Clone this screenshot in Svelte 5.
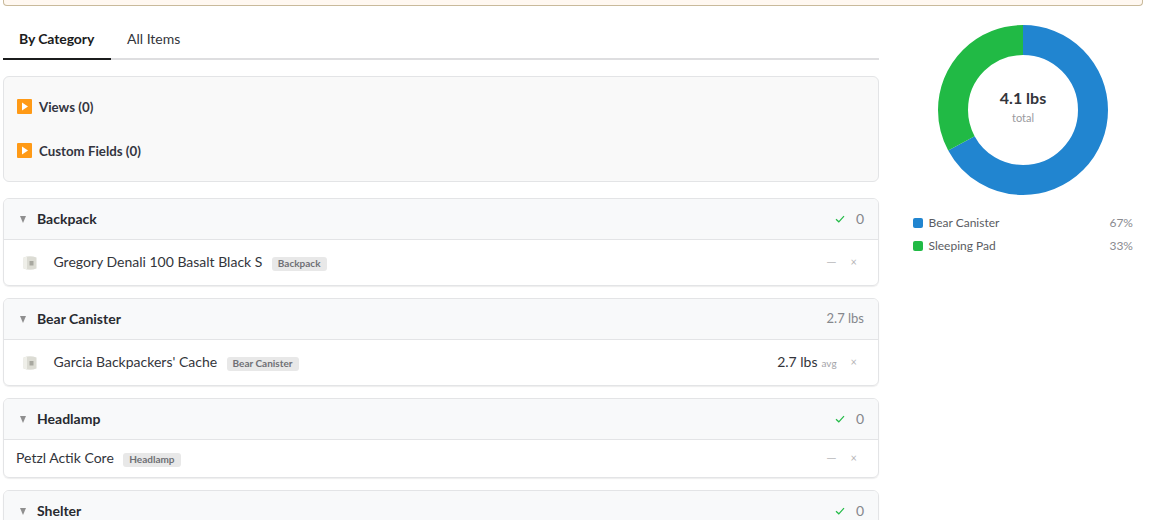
<script>
  const categories = [
    {
      name: 'Backpack',
      weight: null,
      items: [{ name: 'Gregory Denali 100 Basalt Black S', tag: 'Backpack', thumb: true, weight: null }]
    },
    {
      name: 'Bear Canister',
      weight: '2.7 lbs',
      items: [{ name: "Garcia Backpackers' Cache", tag: 'Bear Canister', thumb: true, weight: '2.7 lbs' }]
    },
    {
      name: 'Headlamp',
      weight: null,
      items: [{ name: 'Petzl Actik Core', tag: 'Headlamp', thumb: false, weight: null }]
    },
    { name: 'Shelter', weight: null, items: [] }
  ]

  const slices = [
    { name: 'Bear Canister', pct: 67, color: '#2185d0' },
    { name: 'Sleeping Pad', pct: 33, color: '#21ba45' }
  ]

  const circ = 2 * Math.PI * 70
  const sections = ['Views (0)', 'Custom Fields (0)']

  function offset(i) {
    let sum = 0
    for (let j = 0; j < i; j++) sum += slices[j].pct
    return (-sum / 100) * circ
  }
</script>

<div class="page">
  <div class="banner"></div>

  <div class="layout">
    <div class="main">
      <div class="tabs">
        <div class="tab active">By Category</div>
        <div class="tab">All Items</div>
      </div>

      <div class="panel">
        {#each sections as s}
          <div class="section">
            <svg class="emoji" viewBox="0 0 15 15" width="15" height="15">
              <rect width="15" height="15" rx="1" fill="#ff9a16" />
              <path d="M5 3.5 L11 7.5 L5 11.5 Z" fill="#fff" />
            </svg>
            <span class="section-name">{s}</span>
          </div>
        {/each}
      </div>

      {#each categories as cat}
        <div class="card">
          <div class="card-head">
            <span class="caret"></span>
            <span class="cat-name">{cat.name}</span>
            <span class="cat-total">
              {#if cat.weight}
                <span class="cat-weight">{cat.weight}</span>
              {:else}
                <svg class="check" viewBox="0 0 10 8" width="10" height="8">
                  <path d="M1 4.2 L3.8 6.8 L9 1.2" fill="none" stroke="#21ba45" stroke-width="1.2" />
                </svg>
                <span class="count">0</span>
              {/if}
            </span>
          </div>
          {#each cat.items as item}
            <div class="row" class:thumbed={item.thumb}>
              {#if item.thumb}
                <svg class="thumb" viewBox="0 0 16 16" width="16" height="16">
                  <path d="M1.5 2.5 Q8 0 14.5 2.5 L14.5 13.5 Q8 16 1.5 13.5 Z" fill="#dcdcd4" />
                  <path d="M1.5 2.5 Q2.5 8 1.5 13.5 L5 14.6 L5 1.5 Z" fill="#efefe9" />
                  <rect x="7.5" y="6" width="4" height="4.5" fill="#a8a8a0" />
                </svg>
              {/if}
              <span class="item-name">{item.name}</span>
              <span class="tag">{item.tag}</span>
              <span class="item-right">
                {#if item.weight}
                  <span class="item-weight">{item.weight}</span>
                  <span class="avg">avg</span>
                {:else}
                  <span class="dash">—</span>
                {/if}
                <span class="remove">×</span>
              </span>
            </div>
          {/each}
        </div>
      {/each}
    </div>

    <aside class="side">
      <div class="donut">
        <svg viewBox="0 0 170 170" width="170" height="170">
          {#each slices as s, i}
            <circle
              cx="85"
              cy="85"
              r="70"
              fill="none"
              stroke={s.color}
              stroke-width="30"
              stroke-dasharray="{(s.pct / 100) * circ} {circ}"
              stroke-dashoffset={offset(i)}
              transform="rotate(-90 85 85)"
            />
          {/each}
        </svg>
        <div class="donut-label">
          <div class="total">4.1 lbs</div>
          <div class="total-sub">total</div>
        </div>
      </div>

      <div class="legend">
        {#each slices as s}
          <div class="legend-row">
            <span class="swatch" style="background: {s.color}"></span>
            <span class="legend-name">{s.name}</span>
            <span class="legend-pct">{s.pct}%</span>
          </div>
        {/each}
      </div>
    </aside>
  </div>
</div>

<style>
  :global(body) {
    margin: 0;
    background: #fff;
    overflow: hidden;
  }

  .page {
    height: 520px;
    overflow: hidden;
    padding-left: 3px;
    font-family: Lato, sans-serif;
    color: #282a30;
  }

  .banner {
    width: 1140px;
    height: 6px;
    box-sizing: border-box;
    background: #fff8f1;
    border: 1px solid #c9ba9b;
    border-top: none;
    border-radius: 0 0 4px 4px;
  }

  .layout {
    display: flex;
  }

  .main {
    width: 876px;
    flex: none;
  }

  .tabs {
    display: flex;
    height: 54px;
    box-sizing: border-box;
    padding-top: 13px;
    border-bottom: 2px solid #dedee0;
  }

  .tab {
    padding: 0 16px;
    height: 41px;
    line-height: 39px;
    box-sizing: border-box;
    font-size: 14px;
    color: #33353b;
  }

  .tab.active {
    width: 108px;
    font-weight: 700;
    letter-spacing: -0.1px;
    color: #1b1c1d;
    border-bottom: 2px solid #1b1c1d;
    white-space: nowrap;
  }

  .panel {
    margin-top: 16px;
    height: 106px;
    box-sizing: border-box;
    padding: 8px 13px;
    background: #f9f9f9;
    border: 1px solid #e3e4e6;
    border-radius: 6px;
    margin-bottom: 16px;
  }

  .section {
    display: flex;
    align-items: center;
    gap: 7px;
    height: 44px;
    font-size: 13.3px;
    font-weight: 700;
    color: #33353f;
  }

  .section-name {
    margin-top: 1px;
    margin-bottom: 1px;
  }

  .emoji {
    margin-bottom: 1px;
  }

  .card {
    border: 1px solid #e3e4e6;
    border-radius: 6px;
    margin-bottom: 12px;
    box-shadow: 0 1px 1px rgba(34, 36, 38, 0.08);
    overflow: hidden;
  }

  .card-head {
    display: flex;
    align-items: center;
    height: 40px;
    padding: 0 14px 0 16px;
    background: #f8f9fa;
    border-bottom: 1px solid #e3e4e6;
  }

  .caret {
    width: 0;
    height: 0;
    border-left: 3.5px solid transparent;
    border-right: 3.5px solid transparent;
    border-top: 7px solid #8f8f8f;
    margin-right: 11px;
  }

  .cat-name {
    font-size: 14px;
    font-weight: 700;
    color: #282a30;
    margin-bottom: 2px;
  }

  .cat-total {
    margin-left: auto;
    display: flex;
    align-items: center;
    font-size: 14px;
    color: #85878c;
  }

  .cat-weight {
    font-size: 13px;
    margin-bottom: 2px;
  }

  .count {
    margin-bottom: 2px;
  }

  .check {
    margin-right: 11px;
  }

  .row {
    display: flex;
    align-items: center;
    height: 37px;
    padding: 0 12px;
    font-size: 14px;
  }

  .row.thumbed {
    height: 45px;
    padding-left: 18px;
  }

  .thumb {
    margin-right: 15.5px;
    flex: none;
  }

  .item-name {
    color: #33353b;
    margin-bottom: 2px;
  }

  .tag {
    margin-left: 9.5px;
    margin-top: 2px;
    padding: 0 6px;
    height: 14px;
    line-height: 13px;
    font-size: 10px;
    font-weight: 700;
    color: #6f7075;
    background: #e8e8e8;
    border-radius: 3px;
  }

  .item-right {
    margin-left: auto;
    display: flex;
    align-items: center;
    padding-right: 9px;
  }

  .item-weight {
    color: #33353b;
    margin-bottom: 2px;
  }

  .avg {
    font-size: 10px;
    color: #a3a4a8;
    margin-left: 4px;
  }

  .dash {
    font-size: 13px;
    color: #c4c4c6;
    margin-bottom: 2px;
  }

  .remove {
    margin-left: 14px;
    font-size: 11px;
    color: #b5b5b7;
    margin-bottom: 2px;
  }

  .side {
    margin-left: 34px;
    width: 220px;
    flex: none;
  }

  .donut {
    position: relative;
    width: 170px;
    height: 170px;
    margin: 19px 0 0 25px;
  }

  .donut svg {
    display: block;
  }

  .donut-label {
    position: absolute;
    inset: 0 0 9px 0;
    display: flex;
    flex-direction: column;
    align-items: center;
    justify-content: center;
  }

  .total {
    font-size: 16px;
    font-weight: 700;
    color: #33353b;
  }

  .total-sub {
    margin-top: 4px;
    font-size: 11px;
    color: #999a9e;
  }

  .legend {
    margin-top: 16px;
  }

  .legend-row {
    display: flex;
    align-items: center;
    height: 23px;
    font-size: 12px;
    color: #5a5c62;
  }

  .swatch {
    width: 10px;
    height: 10px;
    border-radius: 2px;
    margin: 1px 5.5px 0 0;
  }

  .legend-pct {
    margin-left: auto;
    color: #8a8b90;
  }
</style>
